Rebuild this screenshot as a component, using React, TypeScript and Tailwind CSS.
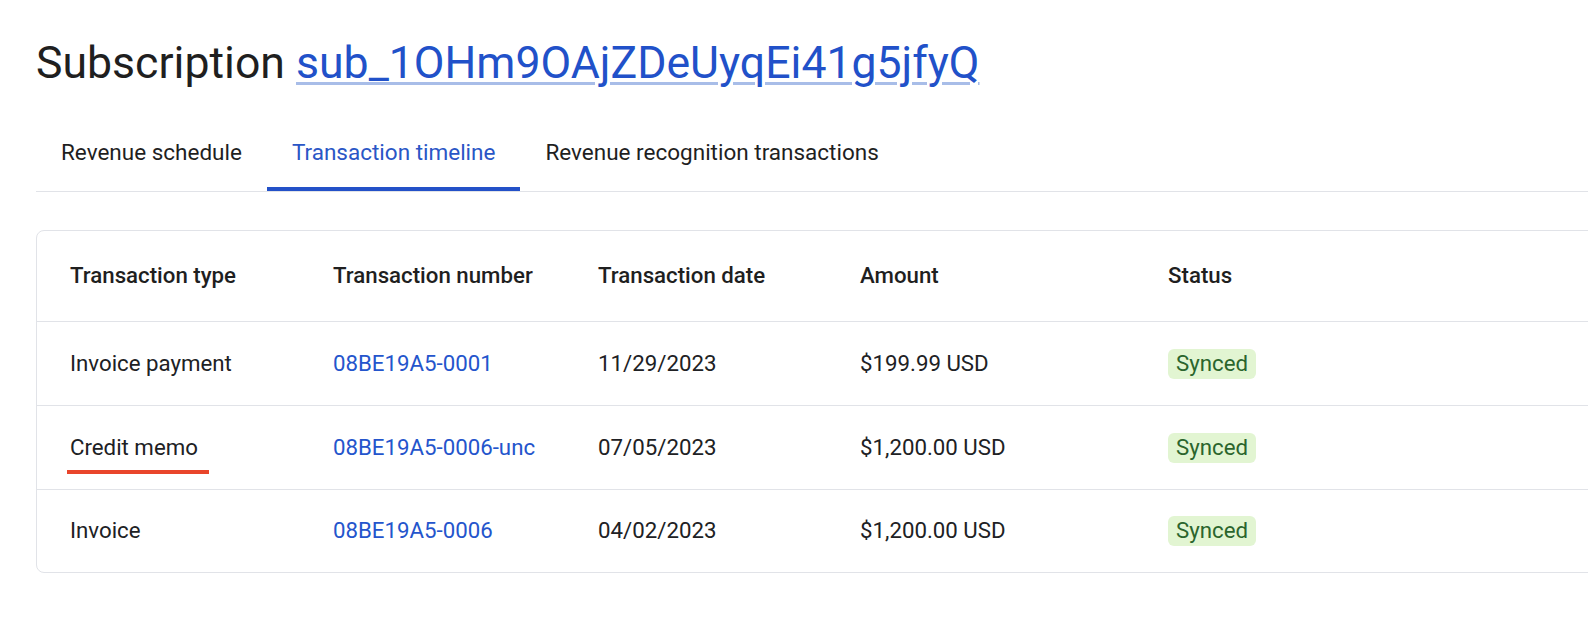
import React from "react";

const rows = [
  { type: "Invoice payment", number: "08BE19A5-0001", date: "11/29/2023", amount: "$199.99 USD" },
  { type: "Credit memo", number: "08BE19A5-0006-unc", date: "07/05/2023", amount: "$1,200.00 USD", marked: true },
  { type: "Invoice", number: "08BE19A5-0006", date: "04/02/2023", amount: "$1,200.00 USD" },
];

const cols = "grid grid-cols-[263px_265px_262px_308px_1fr] items-center pl-[33px]";

export default function App() {
  const tabs = ["Revenue schedule", "Transaction timeline", "Revenue recognition transactions"];
  const active = 1;

  return (
    <div
      className="w-full min-h-[644px] overflow-hidden bg-white text-[#202124]"
      style={{ fontFamily: "Roboto, 'Noto Sans', sans-serif" }}
    >
      <div className="pl-[36px] pt-[37px]">
        {/* Title */}
        <h1 className="text-[44.6px] leading-[52px] font-normal text-[#1f1f1f]">
          Subscription{" "}
          <a
            href="#"
            className="text-[#2151c9] underline decoration-[#a8bde8] decoration-[3px] underline-offset-[4px]"
          >
            sub_1OHm9OAjZDeUyqEi41g5jfyQ
          </a>
        </h1>

        {/* Tabs */}
        <div className="mt-[26px] flex border-b border-[#e1e3e8]">
          {tabs.map((t, i) => (
            <div
              key={t}
              className={
                "h-[76px] px-[25px] pt-[4px] flex items-center border-b-4 text-[22.5px] " +
                (i === active ? "border-[#2351c8] text-[#2a56c6]" : "border-transparent text-[#1f1f1f]")
              }
            >
              {t}
            </div>
          ))}
        </div>

        {/* Table card */}
        <div className="mt-[38px] w-[1600px] rounded-lg border border-[#e1e3e8] text-[22.25px]">
          <div className={cols + " h-[91px] pb-[1px] border-b border-[#e1e3e8] font-medium text-[#1f1f1f]"}>
            <div>Transaction type</div>
            <div>Transaction number</div>
            <div>Transaction date</div>
            <div>Amount</div>
            <div>Status</div>
          </div>

          {rows.map((r, i) => (
            <div
              key={r.number}
              className={
                cols +
                (i < rows.length - 1 ? " h-[84px] border-b border-[#e1e3e8]" : " h-[82px]")
              }
            >
              <div>
                <span className="relative inline-block leading-[22px]">
                  {r.type}
                  {r.marked && (
                    <span className="absolute left-[-3px] top-[34px] h-[4px] w-[142px] bg-[#e9452b]" />
                  )}
                </span>
              </div>
              <div>
                <a href="#" className="text-[#2455cc]">
                  {r.number}
                </a>
              </div>
              <div>{r.date}</div>
              <div>{r.amount}</div>
              <div>
                <span className="inline-flex h-[30px] items-center rounded-[6px] bg-[#e2f5d2] px-[8px] text-[#2b652d]">
                  Synced
                </span>
              </div>
            </div>
          ))}
        </div>
      </div>
    </div>
  );
}
